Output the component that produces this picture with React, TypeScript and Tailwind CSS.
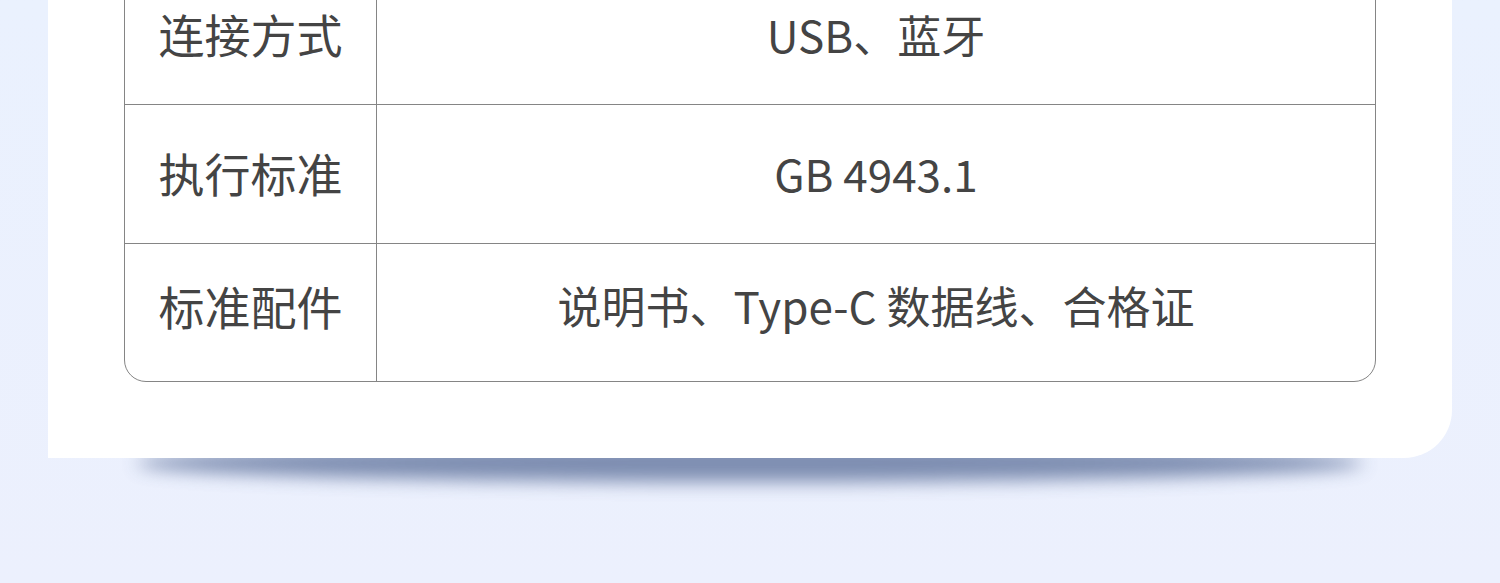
import React from "react";

const rows: { label: string; value: string; pad: string }[] = [
  { label: "连接方式", value: "USB、蓝牙", pad: "pb-[3px]" },
  { label: "执行标准", value: "GB 4943.1", pad: "pb-[3px]" },
  { label: "标准配件", value: "说明书、Type-C 数据线、合格证", pad: "pb-[15px]" },
];

export default function App() {
  return (
    <div
      className="relative w-[1500px] h-[583px] overflow-hidden bg-gradient-to-b from-[#eaf1fe] to-[#ecf0fd]"
      style={{ fontFamily: '"Noto Sans CJK SC", "Noto Sans", sans-serif' }}
    >
      <div className="relative ml-[48px] w-[1404px] -mt-[100px]">
        <div className="absolute left-[88px] right-[88px] bottom-[-24px] h-[38px] rounded-[50%] bg-[#62759e] blur-[9px] opacity-80" />
        <div className="relative bg-white rounded-br-[48px] pt-[65px] pb-[76px] px-[76px]">
          <div className="border border-[#858585] rounded-[22px] overflow-hidden">
            {rows.map((r, i) => (
              <div
                key={r.label}
                className={`flex ${i < rows.length - 1 ? "h-[139px] border-b border-[#858585]" : "h-[137px]"}`}
              >
                <div className={`w-[252px] shrink-0 flex items-center justify-center border-r border-[#858585] text-[46px] text-[#444444] ${r.pad}`}>
                  {r.label}
                </div>
                <div className={`flex-1 flex items-center justify-center text-[44px] text-[#444444] ${r.pad}`}>
                  {r.value}
                </div>
              </div>
            ))}
          </div>
        </div>
      </div>
    </div>
  );
}
